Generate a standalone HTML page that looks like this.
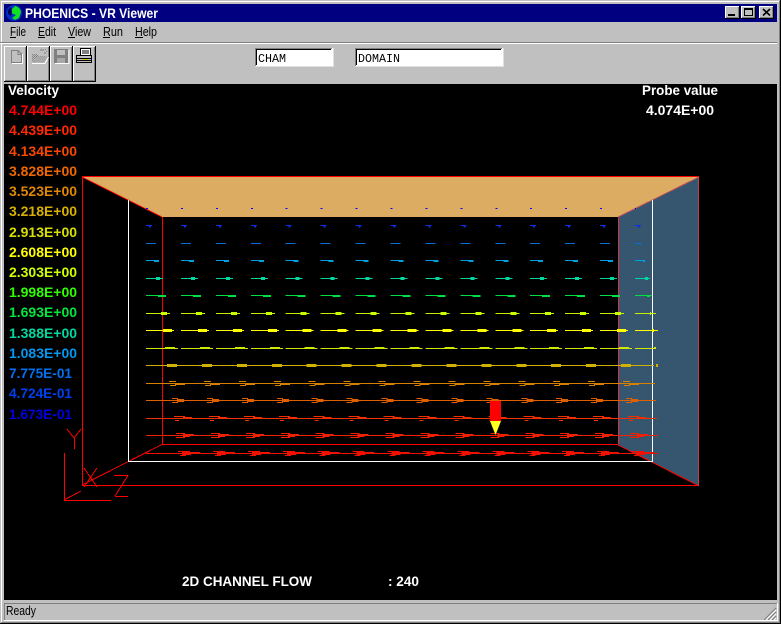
<!DOCTYPE html>
<html><head><meta charset="utf-8"><title>PHOENICS - VR Viewer</title>
<style>
html,body{margin:0;padding:0;background:#c0c0c0;width:781px;height:624px;overflow:hidden}
svg{display:block}
text{font-family:"Liberation Sans",sans-serif;white-space:pre}
.b{font-weight:bold;font-size:14px}
.m{font-size:13px;fill:#000}
.c{font-family:"Liberation Mono",monospace;font-size:12px;fill:#000}
.r path{fill:none}
</style></head>
<body>
<svg width="781" height="624" viewBox="0 0 781 624" xmlns="http://www.w3.org/2000/svg">
<defs>
<pattern id="d" width="2" height="2" patternUnits="userSpaceOnUse"><rect width="2" height="2" fill="#c0c0c0"/><rect width="1" height="1" fill="#808080"/><rect x="1" y="1" width="1" height="1" fill="#808080"/></pattern>
</defs>
<rect width="781" height="624" fill="#c0c0c0"/>
<g shape-rendering="crispEdges">
<path d="M1.500 1V622M1 1.500H779" stroke="#fff" fill="none"/>
<path d="M0 623.500H781M780.500 0V624" stroke="#000" fill="none"/>
<path d="M1 622.500H780M779.500 1V623" stroke="#808080" fill="none"/>
<rect x="4" y="4" width="773" height="18" fill="#000080"/>
<path d="M0 42.500H777" stroke="#808080"/><path d="M0 43.500H777" stroke="#fff"/>
</g>
<circle cx="14" cy="13" r="8" fill="#0030c0"/>
<path d="M15 6a7 7 0 0 1 6 6l-2 6-4 2-3-2 4-3-5-2 1-4z" fill="#10e020"/>
<path d="M8 10l3-3 1 5-1 4-3-2z" fill="#000060"/>
<text x="25" y="18" class="b" fill="#fff" textLength="133" lengthAdjust="spacingAndGlyphs">PHOENICS - VR Viewer</text>
<!-- window buttons -->
<g shape-rendering="crispEdges">
<rect x="725" y="6" width="15" height="13" fill="#000"/><rect x="725" y="6" width="14" height="12" fill="#fff"/><rect x="726" y="7" width="13" height="11" fill="#808080"/><rect x="726" y="7" width="12" height="10" fill="#c0c0c0"/><rect x="728" y="14" width="7" height="2" fill="#000"/>
<rect x="741" y="6" width="15" height="13" fill="#000"/><rect x="741" y="6" width="14" height="12" fill="#fff"/><rect x="742" y="7" width="13" height="11" fill="#808080"/><rect x="742" y="7" width="12" height="10" fill="#c0c0c0"/>
<path d="M744 8.500H753M744 9.500H753M744.500 8V16M752.500 8V16M744 15.500H753" stroke="#000" fill="none"/>
<rect x="759" y="6" width="15" height="13" fill="#000"/><rect x="759" y="6" width="14" height="12" fill="#fff"/><rect x="760" y="7" width="13" height="11" fill="#808080"/><rect x="760" y="7" width="12" height="10" fill="#c0c0c0"/>
</g>
<path d="M763 9l7 6.500M770 9l-7 6.500" stroke="#000" stroke-width="1.600" fill="none"/>
<!-- menu -->
<text x="10" y="36" class="m" textLength="16" lengthAdjust="spacingAndGlyphs">File</text>
<text x="38" y="36" class="m" textLength="18" lengthAdjust="spacingAndGlyphs">Edit</text>
<text x="68" y="36" class="m" textLength="23" lengthAdjust="spacingAndGlyphs">View</text>
<text x="103" y="36" class="m" textLength="20" lengthAdjust="spacingAndGlyphs">Run</text>
<text x="135" y="36" class="m" textLength="22" lengthAdjust="spacingAndGlyphs">Help</text>
<path d="M10 37.500H16M38 37.500H45M68 37.500H75M103 37.500H110M135 37.500H143" stroke="#000" shape-rendering="crispEdges"/>
<!-- toolbar -->
<g shape-rendering="crispEdges">
<rect x="4" y="46" width="23" height="36" fill="#000"/><rect x="4" y="46" width="22" height="35" fill="#fff"/><rect x="5" y="47" width="21" height="34" fill="#808080"/><rect x="5" y="47" width="20" height="33" fill="#c0c0c0"/>
<rect x="27" y="46" width="23" height="36" fill="#000"/><rect x="27" y="46" width="22" height="35" fill="#fff"/><rect x="28" y="47" width="21" height="34" fill="#808080"/><rect x="28" y="47" width="20" height="33" fill="#c0c0c0"/>
<rect x="50" y="46" width="23" height="36" fill="#000"/><rect x="50" y="46" width="22" height="35" fill="#fff"/><rect x="51" y="47" width="21" height="34" fill="#808080"/><rect x="51" y="47" width="20" height="33" fill="#c0c0c0"/>
<rect x="73" y="46" width="23" height="36" fill="#000"/><rect x="73" y="46" width="22" height="35" fill="#fff"/><rect x="74" y="47" width="21" height="34" fill="#808080"/><rect x="74" y="47" width="20" height="33" fill="#c0c0c0"/>
<!-- new -->
<path d="M11 50.500H18L21.500 54V62.500H11.500V50" fill="#c0c0c0" stroke="#808080"/>
<path d="M12 63.500H22.500V54" stroke="#fff" fill="none"/>
<path d="M18 51V54.500H21.500" stroke="#808080" fill="none"/>
<!-- open -->
<path d="M32 54H38V56H45V62L32 62Z" fill="url(#d)"/>
<path d="M33 62.500L37 56.500H47.500L44 62.500Z" fill="#a8a8a8"/>
<path d="M32 63.500H45L48.500 57" stroke="#fff" fill="none"/>
<path d="M40 50H44M45 49.500H46M46 51.500H47M44 53H46" stroke="#808080" fill="none"/>
<!-- save -->
<rect x="54" y="49" width="14" height="14" fill="#808080"/>
<rect x="57" y="50" width="8" height="5" fill="#c0c0c0"/>
<rect x="57" y="58" width="8" height="5" fill="#a8a8a8"/>
<path d="M55 63.500H69V50" stroke="#fff" fill="none"/>
<!-- print -->
<path d="M80.500 48.500H90.500V55.500H80.500Z" fill="#fff" stroke="#000"/>
<path d="M82 51H89M82 53H89" stroke="#000"/>
<path d="M76.500 55.500H91.500V62.500H76.500Z" fill="#c0c0c0" stroke="#000"/>
<path d="M77 58.500H91M77 60.500H91" stroke="#000"/>
<rect x="83" y="59" width="5" height="1" fill="#d8c800"/>
<!-- inputs -->
<rect x="255" y="48" width="78" height="18" fill="#fff"/>
<path d="M255.500 66V48.500H332" stroke="#808080" fill="none"/>
<path d="M256.500 65V49.500H331" stroke="#000" fill="none"/>
<path d="M255 66.500H333M333.500 48V67" stroke="#dfdfdf" fill="none"/>
<rect x="355" y="48" width="148" height="18" fill="#fff"/>
<path d="M355.500 66V48.500H502" stroke="#808080" fill="none"/>
<path d="M356.500 65V49.500H501" stroke="#000" fill="none"/>
<path d="M355 66.500H503M503.500 48V67" stroke="#dfdfdf" fill="none"/>
</g>
<text x="258" y="62" class="c" textLength="28" lengthAdjust="spacingAndGlyphs">CHAM</text>
<text x="358" y="62" class="c" textLength="42" lengthAdjust="spacingAndGlyphs">DOMAIN</text>
<!-- canvas -->
<rect x="4" y="84" width="773" height="516" fill="#000"/>
<g shape-rendering="crispEdges">
<polygon points="82,177 699,177 618,217 162,217" fill="#dcac62"/>
<polygon points="699,177 699,486 618,445 618,217" fill="#36556f"/>
<path d="M82 176.500H699M82.500 177V485.500M82 485.500H699M162.500 217V444.500M162 444.500H618" stroke="#f00" fill="none"/>
<path d="M82 177L162 217M82 485L162 444.500M618 445L699 486" stroke="#f00" fill="none"/>
<path d="M618 217L699 177" stroke="#c05058" fill="none"/>
<path d="M618.500 217V444M698.500 177V486" stroke="#d03848" fill="none"/>
<path d="M128.500 200V461.500H652.500V200" stroke="#fff" fill="none"/>
</g>
<g class="r" shape-rendering="crispEdges">
<path d="M146 208.500H636" stroke="#0000ff" stroke-dasharray="2 32.930"/>
<path d="M146 225.500H641" stroke="#0a30e0" stroke-dasharray="6 28.930"/>
<path d="M149 226.500H644" stroke="#0a30e0" stroke-width="2" stroke-dasharray="2 32.930"/>
<path d="M146 243.500H642" stroke="#0a70d8" stroke-dasharray="10 24.930"/>
<path d="M146 260.500H644" stroke="#00a0e0" stroke-dasharray="13 21.930"/>
<path d="M154 261H645" stroke="#00a0e0" stroke-width="2" stroke-dasharray="5 29.930"/>
<path d="M146 278.500H650" stroke="#00d8a0" stroke-dasharray="17 17.930"/>
<path d="M156 278.500H648" stroke="#00d8a0" stroke-width="3" stroke-dasharray="4 30.930"/>
<path d="M146 295.500H652" stroke="#00e040" stroke-dasharray="20 14.930"/>
<path d="M158 296H650" stroke="#00e040" stroke-width="2" stroke-dasharray="8 26.930"/>
<path d="M146 313.500H656" stroke="#c8f000" stroke-dasharray="24 10.930"/>
<path d="M161 313.500H651" stroke="#c8ff00" stroke-width="3" stroke-dasharray="6 28.930"/>
<path d="M146 330.500H658" stroke="#ffff00" stroke-dasharray="28 6.930"/>
<path d="M163 330.500H654" stroke="#ffff00" stroke-width="3" stroke-dasharray="9 25.930"/>
<path d="M146 348.500H654" stroke="#d0e800" stroke-dasharray="32 2.930"/>
<path d="M165 348H656" stroke="#d0e800" stroke-width="2" stroke-dasharray="10 24.930"/>
<path d="M146 365.500H654" stroke="#d0b000"/>
<path d="M167 365.500H658" stroke="#d0b000" stroke-width="3" stroke-dasharray="10 24.930"/>
<path d="M146 383.500H655" stroke="#d88000"/>
<path d="M175 384H655" stroke="#d88000" stroke-width="2" stroke-dasharray="10 24.930"/>
<path d="M169 381.500H650" stroke="#d88000" stroke-dasharray="7 27.930"/>
<path d="M170 385.500H650" stroke="#d88000" stroke-dasharray="6 28.930"/>
<path d="M146 400.500H656" stroke="#e06000"/>
<path d="M177 400.500H655" stroke="#e06000" stroke-width="3" stroke-dasharray="7 27.930"/>
<path d="M172 398.500H650" stroke="#e06000" stroke-dasharray="6 28.930"/>
<path d="M172 402.500H650" stroke="#e06000" stroke-dasharray="6 28.930"/>
<path d="M146 418.500H657" stroke="#f03000"/>
<path d="M183 418H657" stroke="#f03000" stroke-width="2" stroke-dasharray="9 25.930"/>
<path d="M174 416.500H655" stroke="#f03000" stroke-dasharray="11 23.930"/>
<path d="M175 420.500H655" stroke="#f03000" stroke-dasharray="4 30.930"/>
<path d="M146 435.500H658" stroke="#f02000"/>
<path d="M183 435.500H650" stroke="#f02000" stroke-width="3" stroke-dasharray="7 27.930"/>
<path d="M190 435H650" stroke="#f02000" stroke-width="2" stroke-dasharray="4 30.930"/>
<path d="M176 433.500H650" stroke="#f02000" stroke-dasharray="9 25.930"/>
<path d="M176 437.500H650" stroke="#f02000" stroke-dasharray="9 25.930"/>
<path d="M146 453.500H658" stroke="#f01000"/>
<path d="M182 453.500H650" stroke="#f01000" stroke-width="3" stroke-dasharray="9 25.930"/>
<path d="M191 453H655" stroke="#f01000" stroke-width="2" stroke-dasharray="9 25.930"/>
<path d="M178 451.500H650" stroke="#f01000" stroke-dasharray="12 22.930"/>
<path d="M180 455.500H650" stroke="#f01000" stroke-dasharray="6 28.930"/>
</g>
<rect x="490" y="401" width="11" height="20" fill="#f00" shape-rendering="crispEdges"/>
<polygon points="490,421 501,421 495.500,435" fill="#ffff20"/>
<!-- axes -->
<g fill="none" stroke="#f00" shape-rendering="crispEdges">
<path d="M64.500 453V500.500H111M64 500L81 491"/>
<path d="M67 429L74 438M81 429L74 438M74.500 438V449"/>
<path d="M84 468L97 487M97 468L84 487"/>
<path d="M114 475.500H128L115 496M115 496.500H128"/>
</g>
<!-- legend -->
<g class="b">
<text x="8" y="95" fill="#fff" textLength="51" lengthAdjust="spacingAndGlyphs">Velocity</text>
<text x="642" y="95" fill="#fff" textLength="76" lengthAdjust="spacingAndGlyphs">Probe value</text>
<text x="646" y="115" fill="#fff" textLength="68" lengthAdjust="spacingAndGlyphs">4.074E+00</text>
<text x="9" y="115" fill="#ff0000" textLength="68" lengthAdjust="spacingAndGlyphs">4.744E+00</text>
<text x="9" y="135" fill="#ff2800" textLength="68" lengthAdjust="spacingAndGlyphs">4.439E+00</text>
<text x="9" y="156" fill="#f84800" textLength="68" lengthAdjust="spacingAndGlyphs">4.134E+00</text>
<text x="9" y="176" fill="#f06800" textLength="68" lengthAdjust="spacingAndGlyphs">3.828E+00</text>
<text x="9" y="196" fill="#e08800" textLength="68" lengthAdjust="spacingAndGlyphs">3.523E+00</text>
<text x="9" y="216" fill="#d8b000" textLength="68" lengthAdjust="spacingAndGlyphs">3.218E+00</text>
<text x="9" y="237" fill="#d8e000" textLength="68" lengthAdjust="spacingAndGlyphs">2.913E+00</text>
<text x="9" y="257" fill="#ffff00" textLength="68" lengthAdjust="spacingAndGlyphs">2.608E+00</text>
<text x="9" y="277" fill="#d0ff00" textLength="68" lengthAdjust="spacingAndGlyphs">2.303E+00</text>
<text x="9" y="297" fill="#30ff00" textLength="68" lengthAdjust="spacingAndGlyphs">1.998E+00</text>
<text x="9" y="317" fill="#00e840" textLength="68" lengthAdjust="spacingAndGlyphs">1.693E+00</text>
<text x="9" y="338" fill="#00d8a0" textLength="68" lengthAdjust="spacingAndGlyphs">1.388E+00</text>
<text x="9" y="358" fill="#0098f0" textLength="68" lengthAdjust="spacingAndGlyphs">1.083E+00</text>
<text x="9" y="378" fill="#0070f0" textLength="63" lengthAdjust="spacingAndGlyphs">7.775E-01</text>
<text x="9" y="398" fill="#0040f0" textLength="63" lengthAdjust="spacingAndGlyphs">4.724E-01</text>
<text x="9" y="419" fill="#0000e0" textLength="63" lengthAdjust="spacingAndGlyphs">1.673E-01</text>
<text x="182" y="586" fill="#fff" textLength="130" lengthAdjust="spacingAndGlyphs">2D CHANNEL FLOW</text>
<text x="388" y="586" fill="#fff" textLength="31" lengthAdjust="spacingAndGlyphs">: 240</text>
</g>
<!-- status -->
<g shape-rendering="crispEdges" fill="none">
<path d="M4.500 620V603.500H777" stroke="#808080"/>
<path d="M4 620.500H778M777.500 603V621" stroke="#fff"/>
<path d="M764 620L776 608M768 620L776 612M772 620L776 616" stroke="#808080"/>
<path d="M766 620L776 610M770 620L776 614M774 620L776 618" stroke="#fff"/>
</g>
<text x="6" y="615" class="m" textLength="30" lengthAdjust="spacingAndGlyphs">Ready</text>
</svg>
</body></html>
